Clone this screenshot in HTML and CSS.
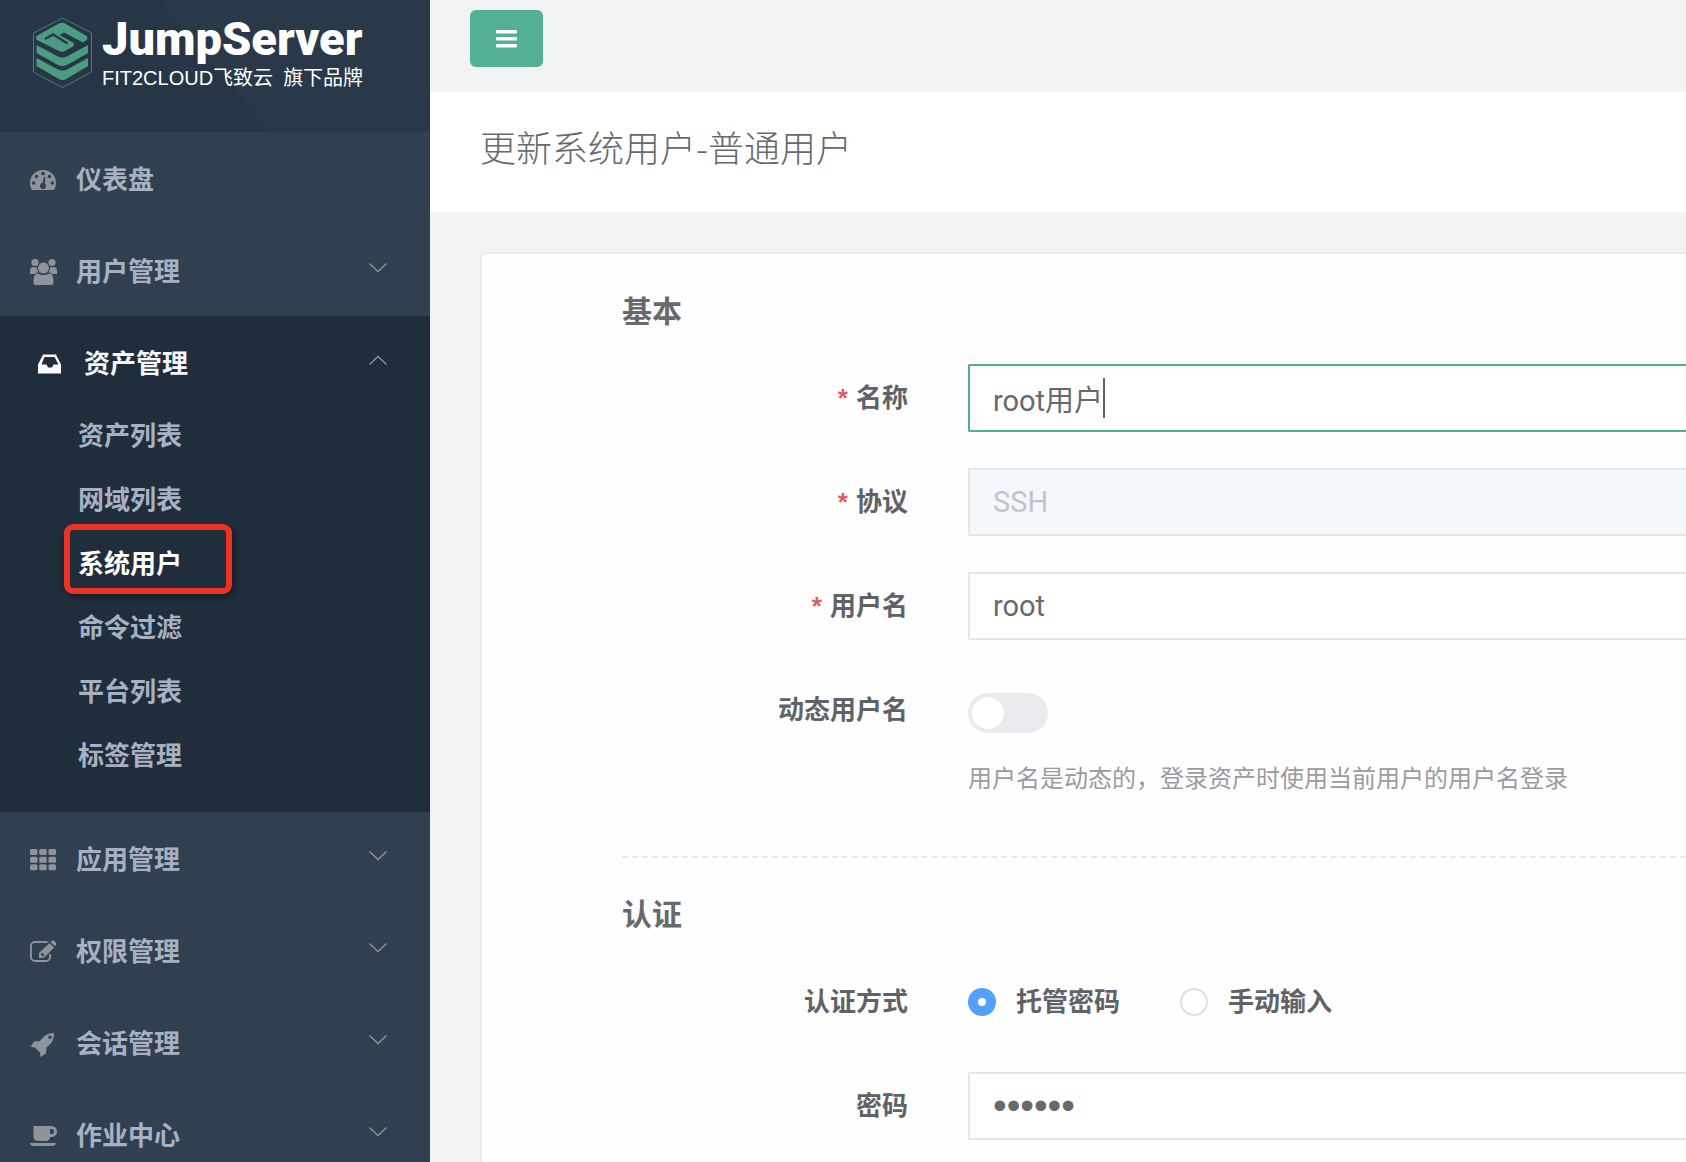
FILE: index.html
```html
<!DOCTYPE html>
<html lang="zh-CN">
<head>
    <meta charset="UTF-8">
    <title>JumpServer</title>
    <link rel="stylesheet" href="styles.css">
</head>
<body>
    <svg class="sprite">
        <symbol id="down" viewBox="0 0 18 10"><path d="M0.500 0.500L9 8.500L17.500 0.500" fill="none" stroke="currentColor" stroke-width="1.300"/></symbol>
        <symbol id="up" viewBox="0 0 18 10"><path d="M0.500 9.500L9 1.500L17.500 9.500" fill="none" stroke="currentColor" stroke-width="1.300"/></symbol>
    </svg>

    <div class="layout">
        <!-- Sidebar -->
        <aside class="sidebar">
            <a class="logo" href="#">
                <svg class="logo-mark" viewBox="0 0 60 72">
                    <path d="M30.500 2L59.500 17V56L30.500 71.500L1.500 56V17Z" fill="none" stroke="#3b8579" stroke-width="1"/>
                    <g fill="#4a9d83">
                        <path d="M4.500 20L27 7.500Q30 6 33 7.500L54 19.500Q56.500 21.500 54.500 24L51 26.500L32 16.500L27.500 19L41 26.500Q43 28.500 41 30.500L33 35Q30 36.500 27 35L5 24Q3 22 4.500 20Z"/>
                    </g>
                    <path d="M14 23.500L25 17.500M14 23.500L29 31L34 28L20.500 20.500" fill="none" stroke="#4a9d83" stroke-width="1"/>
                    <path d="M13 23L21 18.500L35.500 27.500" fill="none" stroke="#283848" stroke-width="2.500"/>
                    <g fill="#4a9d83">
                        <path d="M4.500 29L26 40.500Q30.500 42.500 35 40.500L56 29V37L35 49Q30.500 51 26 49L4.500 37Z"/>
                        <path d="M4.500 42L26 53.500Q30.500 55.500 35 53.500L56 42V50L35 62.500Q30.500 65.500 26 62.500L4.500 50Z"/>
                    </g>
                </svg>
                <span class="logo-text">
                    <strong>JumpServer</strong>
                    <small>FIT2CLOUD飞致云<span>旗下品牌</span></small>
                </span>
            </a>
            <nav>
                <ul class="menu">
                    <li><a class="item" href="#">
                        <svg class="icon" viewBox="0 0 28 28"><path fill="currentColor" fill-rule="evenodd" d="M1 17a13 13 0 0 1 26 0c0 3-1 5-2 7H3c-1-2-2-4-2-7z"/><g fill="#304050"><circle cx="4.600" cy="17" r="1.800"/><circle cx="7.500" cy="10.500" r="1.800"/><circle cx="14" cy="7.600" r="1.800"/><circle cx="20.500" cy="10.500" r="1.800"/><circle cx="23.400" cy="17" r="1.800"/><circle cx="14" cy="20" r="3"/><path d="M13 19l2-8h1.500l-1 8z"/></g></svg>
                        仪表盘</a></li>
                    <li><a class="item" href="#">
                        <svg class="icon" viewBox="0 0 28 28"><g fill="currentColor"><circle cx="6" cy="4.500" r="3.600"/><circle cx="23" cy="4.500" r="3.600"/><path d="M1 16v-3c0-3 1-4 3-4 2 1 3 0 5 0-1 3 0 5 1 7H3c-1 0-2 0-2 0zM28 16v-3c0-3-1-4-3-4-2 1-3 0-5 0 1 3 0 5-1 7h7c1 0 2 0 2 0z"/></g><g fill="currentColor" stroke="#304050" stroke-width="1"><path d="M9 15c3 2 8 2 11 0 4 0 5 4 5 9 0 2-1 3.500-3 3.500H7c-2 0-3-1.500-3-3.500 0-5 1-9 5-9z"/><circle cx="14.500" cy="10" r="6"/></g></svg>
                        用户管理<svg class="arrow"><use href="#down"/></svg></a></li>
                    <li class="open">
                        <a class="item" href="#">
                            <svg class="icon" viewBox="0 0 28 28"><path fill="currentColor" fill-rule="evenodd" d="M6 4.500h13l5 10v9H1v-9zM7.500 7L4.500 14.500h5l1.500 3h4l1.500-3h5L17.500 7z"/></svg>
                            资产管理<svg class="arrow"><use href="#up"/></svg></a>
                        <ul class="submenu">
                            <li><a href="#">资产列表</a></li>
                            <li><a href="#">网域列表</a></li>
                            <li class="current"><a href="#">系统用户</a></li>
                            <li><a href="#">命令过滤</a></li>
                            <li><a href="#">平台列表</a></li>
                            <li><a href="#">标签管理</a></li>
                        </ul>
                    </li>
                    <li><a class="item" href="#">
                        <svg class="icon" viewBox="0 0 28 28"><g fill="currentColor"><rect x="1" y="3" width="7.500" height="6" rx="1.500"/><rect x="10.200" y="3" width="7.500" height="6" rx="1.500"/><rect x="19.500" y="3" width="7.500" height="6" rx="1.500"/><rect x="1" y="10.700" width="7.500" height="6" rx="1.500"/><rect x="10.200" y="10.700" width="7.500" height="6" rx="1.500"/><rect x="19.500" y="10.700" width="7.500" height="6" rx="1.500"/><rect x="1" y="18.300" width="7.500" height="6" rx="1.500"/><rect x="10.200" y="18.300" width="7.500" height="6" rx="1.500"/><rect x="19.500" y="18.300" width="7.500" height="6" rx="1.500"/></g></svg>
                        应用管理<svg class="arrow"><use href="#down"/></svg></a></li>
                    <li><a class="item" href="#">
                        <svg class="icon" viewBox="0 0 28 28"><path d="M18.500 4H6a4 4 0 0 0-4 4v11a4 4 0 0 0 4 4h11a4 4 0 0 0 4-4v-3" fill="none" stroke="currentColor" stroke-width="1.900"/><path fill="currentColor" fill-rule="evenodd" d="M10 20v-5L20.500 5l4.500 4.500L15 20zM12 15.500v1.500h1.500v1.500h1l1.200-1.200-2.500-2.500zM21.500 4l1.500-1.200c.5-.5 1.500-.5 2 0L27 5c.5.500.5 1.500 0 2l-1.200 1.300z"/></svg>
                        权限管理<svg class="arrow"><use href="#down"/></svg></a></li>
                    <li><a class="item" href="#">
                        <svg class="icon" viewBox="0 0 28 28"><path fill="currentColor" fill-rule="evenodd" d="M25 3c-7 0-10 3-14 8l-6 .5L1.500 17l4.500.5 5 5 .5 4.500 5.500-3.500.5-6c5-4 7.500-7 7.500-14.500zM21 5.500a1.800 1.800 0 1 1 0 3.600 1.800 1.800 0 0 1 0-3.600z"/></svg>
                        会话管理<svg class="arrow"><use href="#down"/></svg></a></li>
                    <li><a class="item" href="#">
                        <svg class="icon" viewBox="0 0 28 28"><path fill="currentColor" fill-rule="evenodd" d="M4.500 4H22.500a5.500 5.500 0 0 1 0 11H21c0 2.500-1.500 4-4 4H9c-2.500 0-4.500-1.500-4.500-4zM21 7v5h1.500a2.500 2.500 0 0 0 0-5zM1 21h26c0 2-2 3-4 3H5c-2 0-4-1-4-3z"/></svg>
                        作业中心<svg class="arrow"><use href="#down"/></svg></a></li>
                </ul>
            </nav>
        </aside>

        <!-- Content -->
        <div class="main">
            <div class="topbar">
                <button class="toggle" type="button" aria-label="菜单">
                    <svg viewBox="0 0 22 18"><g fill="#fff"><rect width="21" height="3.500" rx="1"/><rect y="7" width="21" height="3.500" rx="1"/><rect y="14" width="21" height="3.500" rx="1"/></g></svg>
                </button>
            </div>
            <h1 class="page-title">更新系统用户-普通用户</h1>
            <form class="card">
                <h2>基本</h2>
                <div class="row">
                    <label class="name required" for="name">名称</label>
                    <div class="field-box">
                        <input class="field active" id="name" type="text" value="root用户">
                        <div class="caret" aria-hidden="true"><span>root用户</span></div>
                    </div>
                </div>
                <div class="row">
                    <label class="name required" for="protocol">协议</label>
                    <input class="field" id="protocol" type="text" value="SSH" disabled>
                </div>
                <div class="row">
                    <label class="name required" for="username">用户名</label>
                    <input class="field" id="username" type="text" value="root">
                </div>
                <div class="row">
                    <label class="name" for="dynamic">动态用户名</label>
                    <div class="switch-box">
                        <input class="switch" id="dynamic" type="checkbox">
                        <p class="help">用户名是动态的，登录资产时使用当前用户的用户名登录</p>
                    </div>
                </div>
                <hr>
                <h2>认证</h2>
                <div class="row" role="radiogroup" aria-labelledby="auth">
                    <span class="name" id="auth">认证方式</span>
                    <div class="radios">
                        <label><input type="radio" name="auth" checked>托管密码</label>
                        <label><input type="radio" name="auth">手动输入</label>
                    </div>
                </div>
                <div class="row">
                    <label class="name" for="password">密码</label>
                    <input class="field" id="password" type="password" value="secret">
                </div>
            </form>
        </div>
    </div>
</body>
</html>
```
FILE: styles.css
```css
*, *::before, *::after { box-sizing: border-box; }
body { margin: 0; font-family: "Liberation Sans", "Noto Sans CJK SC", sans-serif; color: #606266; background: #f1f2f4; }
ul { list-style: none; margin: 0; padding: 0; }
a { color: inherit; text-decoration: none; }
.sprite { display: none; }
.layout { display: flex; height: 100vh; overflow: hidden; }

/* Sidebar */
.sidebar { flex: 0 0 430px; background: #304050; color: #a7b1c2; font-size: 26px; font-weight: bold; }
.logo { display: flex; height: 132px; padding: 16px 32px; gap: 10px; background: linear-gradient(50deg, #273646 50%, #293949 50%); color: #fff; }
.logo-mark { width: 60px; height: 72px; }
.logo-text { display: flex; flex-direction: column; white-space: nowrap; }
.logo-text strong { font: 900 47px/46px Roboto, sans-serif; }
.logo-text small { font: 20px/32px "Liberation Sans", "Noto Sans CJK SC", sans-serif; }
.logo-text small span { margin-left: 10px; }
.item { display: flex; align-items: center; height: 92px; padding: 4px 43px 0 29px; line-height: 40px; }
.icon { width: 28px; height: 28px; margin-right: 19px; color: #909399; }
.arrow { width: 18px; height: 10px; margin-left: auto; margin-bottom: 8px; color: #909399; }
.open { background: #202d3b; padding-bottom: 24px; }
.open .item { height: 88px; padding-top: 8px; padding-left: 37px; color: #f4f6fa; }
.open .icon { color: #fff; }
.submenu li { position: relative; }
.submenu a { display: block; padding-left: 78px; line-height: 64px; }
.current { color: #fff; }
.current::after { content: ""; position: absolute; left: 64px; top: -8px; width: 168px; height: 70px; border: 6px solid #ea3323; border-radius: 9px; box-shadow: 2px 3px 6px rgba(0, 0, 0, 0.4); }

/* Content */
.main { flex: 1; min-width: 0; }
.topbar { height: 92px; padding: 10px 40px; }
.toggle { display: flex; align-items: center; justify-content: center; width: 73px; height: 57px; background: #53b094; border: none; border-radius: 6px; cursor: pointer; }
.toggle svg { width: 22px; height: 18px; }
.page-title { margin: 0; padding: 0 50px 12px; background: #fff; color: #676a6c; font-family: "Noto Sans CJK SC", sans-serif; font-size: 36px; font-weight: 300; line-height: 108px; }
.card { margin: 40px 0 0 50px; padding: 33px 0 60px 140px; background: #fefefe; border: 2px solid #e9ebef; border-right: none; border-radius: 6px 0 0 0; }
h2 { margin: 0 0 27px; color: #676a6c; font-size: 30px; line-height: 50px; }
.row { display: flex; margin-bottom: 36px; }
.name { flex: 0 0 346px; height: 68px; padding-right: 60px; text-align: right; font-size: 26px; font-weight: bold; line-height: 68px; }
.required::before { content: "*"; margin-right: 8px; color: #e05c65; }
.field { flex: 1; min-width: 0; height: 68px; padding: 0 23px; font: 29px Roboto, "Noto Sans CJK SC", sans-serif; color: #676a6c; background: #fff; border: 2px solid #e5e6e7; border-right: none; border-radius: 2px 0 0 2px; outline: none; }
.field.active, .field:focus { border-color: #4fb193; }
.field:disabled { color: #c0c4cc; background: #f4f7fc; }
.field[type="password"] { font: 39px "Liberation Sans", sans-serif; }
.field-box { position: relative; display: flex; flex: 1; min-width: 0; }
.caret { position: absolute; left: 25px; top: 14px; height: 40px; border-right: 2px solid #606266; font: 29px/40px Roboto, "Noto Sans CJK SC", sans-serif; pointer-events: none; }
.caret span { visibility: hidden; }
.field-box:focus-within .caret { display: none; }
.switch { appearance: none; display: block; width: 80px; height: 40px; margin: 17px 0 0; padding: 4px; background: #e9ebef; border-radius: 20px; }
.switch::before { content: ""; display: block; width: 32px; height: 32px; background: #fff; border-radius: 50%; }
.help { margin: 22px 0 0; color: #9a9b9d; font-size: 24px; line-height: 48px; }
hr { margin: 53px 0 32px; border: none; border-top: 2px dashed #e7eaec; }
hr + h2 { margin-bottom: 28px; }
.radios { display: flex; gap: 60px; font-size: 26px; font-weight: bold; }
.radios label { display: flex; align-items: center; height: 68px; gap: 20px; line-height: 68px; }
.radios input { appearance: none; width: 28px; height: 28px; margin: 0; background: #fff; border: 2px solid #dcdfe6; border-radius: 50%; }
.radios input:checked { border: 10px solid #549ff8; }
```
